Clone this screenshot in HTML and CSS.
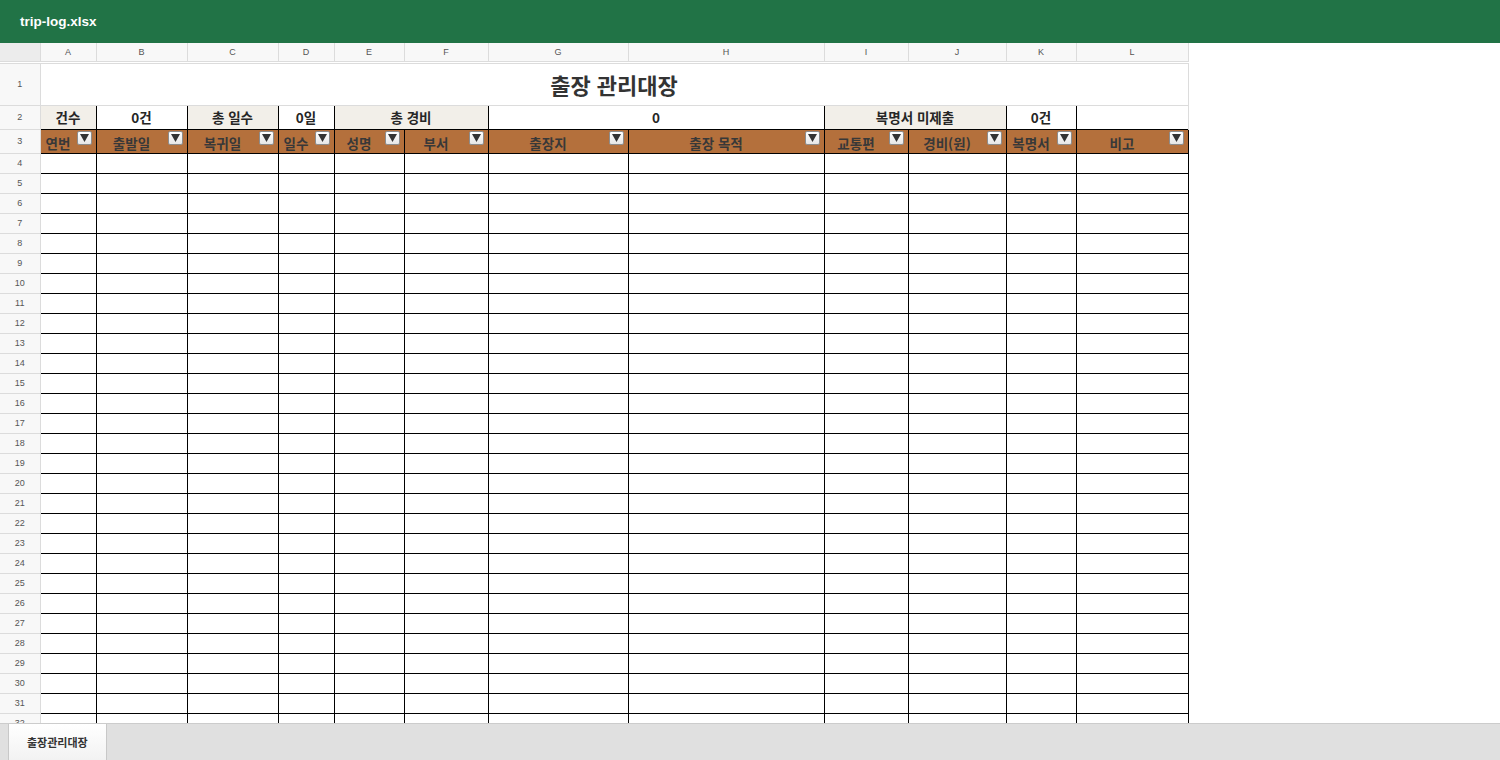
FILE: index.html
```html
<!DOCTYPE html>
<html lang="ko">
<head>
<meta charset="utf-8">
<title>trip-log.xlsx</title>
<link rel="stylesheet" href="styles.css">
</head>
<body>
<div class="app">
  <header class="topbar">trip-log.xlsx</header>
  <div class="sheet">
    <table class="grid">
      <colgroup>
        <col class="c-rh"><col class="c-a"><col class="c-b"><col class="c-c"><col class="c-d"><col class="c-e"><col class="c-f"><col class="c-g"><col class="c-h"><col class="c-i"><col class="c-j"><col class="c-k"><col class="c-l">
      </colgroup>
      <thead>
        <tr class="r-colhdr">
          <th class="corner"></th>
          <th class="colhdr">A</th><th class="colhdr">B</th><th class="colhdr">C</th><th class="colhdr">D</th><th class="colhdr">E</th><th class="colhdr">F</th><th class="colhdr">G</th><th class="colhdr">H</th><th class="colhdr">I</th><th class="colhdr">J</th><th class="colhdr">K</th><th class="colhdr">L</th>
        </tr>
      </thead>
      <tbody id="rows">
        <tr class="r-title">
          <td class="rh">1</td>
          <td class="title" colspan="12">출장 관리대장</td>
        </tr>
        <tr class="r-sum">
          <td class="rh">2</td>
          <td class="lbl">건수</td>
          <td class="val">0건</td>
          <td class="lbl">총 일수</td>
          <td class="val">0일</td>
          <td class="lbl" colspan="2">총 경비</td>
          <td class="val" colspan="2">0</td>
          <td class="lbl" colspan="2">복명서 미제출</td>
          <td class="val">0건</td>
          <td class="blank"></td>
        </tr>
        <tr class="r-head">
          <td class="rh">3</td>
          <td class="hd"><span class="hd-text">연번</span><span class="filter"><svg viewBox="0 0 9 8" width="9" height="8"><polygon points="0,0 9,0 4.5,8" fill="#333"/></svg></span></td>
          <td class="hd"><span class="hd-text">출발일</span><span class="filter"><svg viewBox="0 0 9 8" width="9" height="8"><polygon points="0,0 9,0 4.5,8" fill="#333"/></svg></span></td>
          <td class="hd"><span class="hd-text">복귀일</span><span class="filter"><svg viewBox="0 0 9 8" width="9" height="8"><polygon points="0,0 9,0 4.5,8" fill="#333"/></svg></span></td>
          <td class="hd"><span class="hd-text">일수</span><span class="filter"><svg viewBox="0 0 9 8" width="9" height="8"><polygon points="0,0 9,0 4.5,8" fill="#333"/></svg></span></td>
          <td class="hd"><span class="hd-text">성명</span><span class="filter"><svg viewBox="0 0 9 8" width="9" height="8"><polygon points="0,0 9,0 4.5,8" fill="#333"/></svg></span></td>
          <td class="hd"><span class="hd-text">부서</span><span class="filter"><svg viewBox="0 0 9 8" width="9" height="8"><polygon points="0,0 9,0 4.5,8" fill="#333"/></svg></span></td>
          <td class="hd"><span class="hd-text">출장지</span><span class="filter"><svg viewBox="0 0 9 8" width="9" height="8"><polygon points="0,0 9,0 4.5,8" fill="#333"/></svg></span></td>
          <td class="hd"><span class="hd-text">출장 목적</span><span class="filter"><svg viewBox="0 0 9 8" width="9" height="8"><polygon points="0,0 9,0 4.5,8" fill="#333"/></svg></span></td>
          <td class="hd"><span class="hd-text">교통편</span><span class="filter"><svg viewBox="0 0 9 8" width="9" height="8"><polygon points="0,0 9,0 4.5,8" fill="#333"/></svg></span></td>
          <td class="hd"><span class="hd-text">경비(원)</span><span class="filter"><svg viewBox="0 0 9 8" width="9" height="8"><polygon points="0,0 9,0 4.5,8" fill="#333"/></svg></span></td>
          <td class="hd"><span class="hd-text">복명서</span><span class="filter"><svg viewBox="0 0 9 8" width="9" height="8"><polygon points="0,0 9,0 4.5,8" fill="#333"/></svg></span></td>
          <td class="hd"><span class="hd-text">비고</span><span class="filter"><svg viewBox="0 0 9 8" width="9" height="8"><polygon points="0,0 9,0 4.5,8" fill="#333"/></svg></span></td>
        </tr>
      </tbody>
    </table>
  </div>
  <footer class="tabs">
    <div class="tab">출장관리대장</div>
  </footer>
</div>
<script src="app.js"></script>
</body>
</html>
```

FILE: app.js
```js
(function () {
  var body = document.getElementById('rows');
  for (var r = 4; r <= 32; r++) {
    var tr = document.createElement('tr');
    tr.className = 'r-data';
    var rh = document.createElement('td');
    rh.className = 'rh';
    rh.textContent = r;
    tr.appendChild(rh);
    for (var c = 0; c < 12; c++) {
      var td = document.createElement('td');
      td.className = 'cell';
      tr.appendChild(td);
    }
    body.appendChild(tr);
  }
})();
```

FILE: styles.css
```css
html, body {
  margin: 0;
  padding: 0;
  background: #ffffff;
}

.app {
  width: 1500px;
  height: 760px;
  display: flex;
  flex-direction: column;
  overflow: hidden;
  font-family: "Noto Sans CJK KR", "Noto Sans", sans-serif;
}

.topbar {
  height: 43px;
  flex: 0 0 43px;
  box-sizing: border-box;
  background: #217346;
  color: #ffffff;
  font-family: "Liberation Sans", "Noto Sans CJK KR", sans-serif;
  font-weight: bold;
  font-size: 13.5px;
  display: flex;
  align-items: center;
  padding-left: 20px;
}

.sheet {
  flex: 1 1 auto;
  overflow: hidden;
  background: #ffffff;
}

.grid {
  border-collapse: collapse;
  table-layout: fixed;
  width: 1188px;
}

.c-rh { width: 40px; }
.c-a { width: 56px; }
.c-b { width: 91px; }
.c-c { width: 91px; }
.c-d { width: 56px; }
.c-e { width: 70px; }
.c-f { width: 84px; }
.c-g { width: 140px; }
.c-h { width: 196px; }
.c-i { width: 84px; }
.c-j { width: 98px; }
.c-k { width: 70px; }
.c-l { width: 112px; }

.grid td, .grid th {
  padding: 0;
  overflow: hidden;
  white-space: nowrap;
}

/* column header row */
.r-colhdr { height: 19px; }

.corner {
  background: #ececec;
  border-right: 1px solid #dcdcdc;
  border-bottom: 3px double #dcdcdc;
}

.colhdr {
  background: #f8f8f8;
  border-right: 1px solid #dcdcdc;
  border-bottom: 3px double #dcdcdc;
  font-family: "Liberation Sans", sans-serif;
  font-weight: normal;
  font-size: 9px;
  color: #555555;
  text-align: center;
  vertical-align: middle;
}

/* row headers */
.rh {
  background: #f8f8f8;
  border-bottom: 1px solid #dcdcdc;
  border-right: 1px solid #dcdcdc;
  font-family: "Liberation Sans", sans-serif;
  font-size: 9px;
  color: #555555;
  text-align: center;
  vertical-align: middle;
}

/* row 1 */
.r-title { height: 43px; }

.title {
  border-left: 1px solid #dcdcdc;
  border-right: 1px solid #dcdcdc;
  border-bottom: 1px solid #dcdcdc;
  text-align: center;
  vertical-align: middle;
  font-size: 22px;
  font-weight: bold;
  color: #333333;
}

/* row 2 */
.r-sum { height: 24px; }

.lbl, .val {
  border: 1px solid #000000;
  text-align: center;
  vertical-align: middle;
  font-size: 13.5px;
  font-weight: bold;
  color: #262626;
}

.lbl { background: #f2efe9; }
.val { background: #ffffff; }

.blank {
  border-right: 1px solid #dcdcdc;
  border-top: 1px solid #dcdcdc;
  background: #ffffff;
}

/* row 3 */
.r-head { height: 24px; }

.hd {
  position: relative;
  background: #b4703c;
  border: 1px solid #000000;
  text-align: center;
  vertical-align: middle;
  font-size: 13.5px;
  font-weight: bold;
  color: #383838;
}

.grid .hd { padding-right: 20px; }

.hd-text {
  display: inline-block;
  padding-top: 3px;
}

.filter {
  position: absolute;
  top: 1px;
  right: 4px;
  width: 13px;
  height: 12px;
  border: 1px solid #8c8c8c;
  border-radius: 2px;
  background: linear-gradient(#ffffff, #e6e6e6);
  display: flex;
  align-items: center;
  justify-content: center;
}

.filter svg { display: block; }

/* data rows */
.r-data { height: 20px; }

.cell {
  border: 1px solid #000000;
  background: #ffffff;
}

/* sheet tabs */
.tabs {
  flex: 0 0 37px;
  height: 37px;
  box-sizing: border-box;
  background: #e0e0e0;
  border-top: 1px solid #cccccc;
  display: flex;
  align-items: stretch;
  padding-left: 8px;
}

.tab {
  display: flex;
  align-items: center;
  padding: 0 18px 0 18px;
  background: linear-gradient(#ffffff, #f2f2f2);
  border-left: 1px solid #c8c8c8;
  border-right: 1px solid #c8c8c8;
  font-size: 11px;
  font-weight: bold;
  color: #333333;
}
```
